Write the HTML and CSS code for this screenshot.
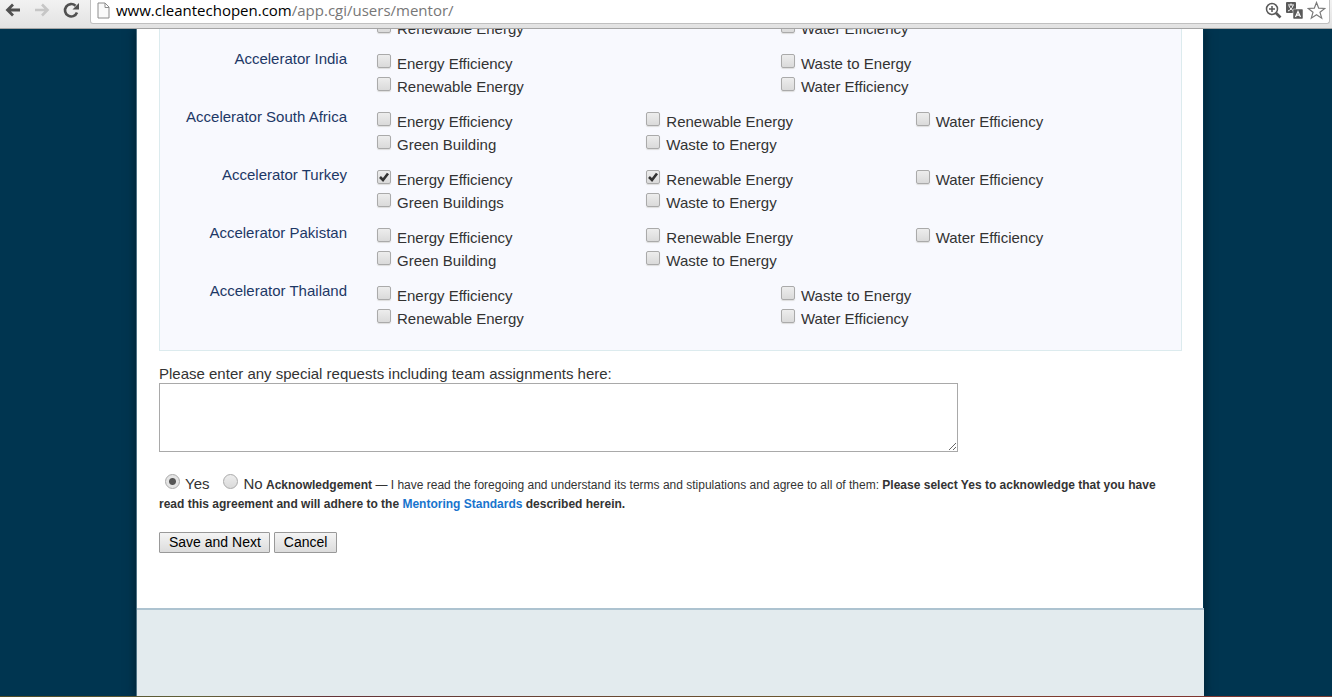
FILE: index.html
```
<!DOCTYPE html>
<html lang="en">
<head>
<meta charset="utf-8">
<title>Mentor application</title>
<link rel="stylesheet" href="styles.css">
</head>
<body>
<header class="toolbar">
  <button class="nav-button" type="button" aria-label="Back"><svg width="18" height="18" viewBox="0 0 18 18"><path d="M16 9H4M9 3.500L3.500 9L9 14.500" fill="none" stroke="#505050" stroke-width="2.800"/></svg></button>
  <button class="nav-button" type="button" aria-label="Forward"><svg width="18" height="18" viewBox="0 0 18 18"><path d="M2 9H14M9 3.500L14.500 9L9 14.500" fill="none" stroke="#c6c6c6" stroke-width="2.600"/></svg></button>
  <button class="nav-button" type="button" aria-label="Reload"><svg width="18" height="18" viewBox="0 0 18 18"><path d="M15 11.500A6.200 6.200 0 1 1 13.500 4.800" fill="none" stroke="#505050" stroke-width="2.600"/><path d="M17 2V8.500H10.500Z" fill="#505050"/></svg></button>
  <div class="address">
    <svg class="page-icon" width="13" height="17" viewBox="0 0 13 17"><path d="M1 1H8L12 5V16H1ZM8 1V5.500H12" fill="#fafafa" stroke="#8c8c8c"/></svg>
    <div class="url" role="textbox" aria-label="Address" tabindex="0">www.cleantechopen.com<span class="url-path">/app.cgi/users/mentor/</span></div>
    <button class="tool-button" type="button" aria-label="Zoom"><svg width="17" height="17" viewBox="0 0 17 17"><circle cx="7" cy="7" r="5.500" fill="none" stroke="#5a5a5a" stroke-width="1.500"/><path d="M4 7H10M7 4V10" stroke="#5a5a5a" stroke-width="1.500"/><path d="M11 11L15.500 15.500" stroke="#5a5a5a" stroke-width="2.600"/></svg></button>
    <button class="tool-button" type="button" aria-label="Translate"><svg width="17" height="17" viewBox="0 0 17 17"><rect x="0" y="0" width="10" height="11" rx="1" fill="#5a5a5a"/><path d="M2 3H8M5 1.500V3M7 3.500C6.500 6 4.500 8 2 9M3 4C4 6.500 6 8 8 9" stroke="#fff" fill="none"/><rect x="7" y="7" width="10" height="10" rx="1" fill="#5a5a5a" stroke="#fff" stroke-width=".5"/><path d="M9.500 15L12 9.500L14.500 15M10.500 13.200H13.500" stroke="#fff" fill="none" stroke-width="1.200"/></svg></button>
    <button class="tool-button" type="button" aria-label="Bookmark"><svg width="19" height="19" viewBox="0 0 19 19"><path d="M9.500 1.500L11.700 7.200L17.800 7.500L13 11.300L14.700 17.200L9.500 13.800L4.300 17.200L6 11.300L1.200 7.500L7.300 7.200Z" fill="#fff" stroke="#7a7a7a" stroke-width="1.200"/></svg></button>
  </div>
</header>
<div class="viewport">
  <div class="shell">
    <main class="content">
      <form>
        <section class="panel">
          <div class="row">
            <span class="row-label"></span>
            <div class="options two">
              <label><input type="checkbox">Energy Efficiency</label><label><input type="checkbox">Waste to Energy</label>
              <label><input type="checkbox">Renewable Energy</label><label><input type="checkbox">Water Efficiency</label>
            </div>
          </div>
          <div class="row" role="group" aria-labelledby="india">
            <span class="row-label" id="india">Accelerator India</span>
            <div class="options two">
              <label><input type="checkbox">Energy Efficiency</label><label><input type="checkbox">Waste to Energy</label>
              <label><input type="checkbox">Renewable Energy</label><label><input type="checkbox">Water Efficiency</label>
            </div>
          </div>
          <div class="row" role="group" aria-labelledby="africa">
            <span class="row-label" id="africa">Accelerator South Africa</span>
            <div class="options three">
              <label><input type="checkbox">Energy Efficiency</label><label><input type="checkbox">Renewable Energy</label><label><input type="checkbox">Water Efficiency</label>
              <label><input type="checkbox">Green Building</label><label><input type="checkbox">Waste to Energy</label>
            </div>
          </div>
          <div class="row" role="group" aria-labelledby="turkey">
            <span class="row-label" id="turkey">Accelerator Turkey</span>
            <div class="options three">
              <label><input type="checkbox" checked>Energy Efficiency</label><label><input type="checkbox" checked>Renewable Energy</label><label><input type="checkbox">Water Efficiency</label>
              <label><input type="checkbox">Green Buildings</label><label><input type="checkbox">Waste to Energy</label>
            </div>
          </div>
          <div class="row" role="group" aria-labelledby="pakistan">
            <span class="row-label" id="pakistan">Accelerator Pakistan</span>
            <div class="options three">
              <label><input type="checkbox">Energy Efficiency</label><label><input type="checkbox">Renewable Energy</label><label><input type="checkbox">Water Efficiency</label>
              <label><input type="checkbox">Green Building</label><label><input type="checkbox">Waste to Energy</label>
            </div>
          </div>
          <div class="row" role="group" aria-labelledby="thailand">
            <span class="row-label" id="thailand">Accelerator Thailand</span>
            <div class="options two">
              <label><input type="checkbox">Energy Efficiency</label><label><input type="checkbox">Waste to Energy</label>
              <label><input type="checkbox">Renewable Energy</label><label><input type="checkbox">Water Efficiency</label>
            </div>
          </div>
        </section>
        <label class="requests-label" for="requests">Please enter any special requests including team assignments here:</label>
        <textarea class="requests" id="requests"></textarea>
        <p class="ack"><label class="choice"><input type="radio" name="ack" checked>Yes</label><label class="choice"><input type="radio" name="ack">No</label> <b>Acknowledgement</b> — I have read the foregoing and understand its terms and stipulations and agree to all of them: <b>Please select Yes to acknowledge that you have read this agreement and will adhere to the <a href="#">Mentoring Standards</a> described herein.</b></p>
        <div class="actions"><button class="push" type="submit">Save and Next</button><button class="push" type="button">Cancel</button></div>
      </form>
    </main>
    <footer class="footer"></footer>
  </div>
</div>
<div class="desktop-edge"></div>
</body>
</html>
```
FILE: styles.css
```
* { box-sizing: border-box; }

body {
  margin: 0;
  height: 100vh;
  display: flex;
  flex-direction: column;
  overflow: hidden;
  font: 15px/23px "Liberation Sans", Arial, sans-serif;
  color: #333;
  background: #003550;
}

.toolbar {
  flex: none;
  display: flex;
  height: 29px;
  padding: 0 2px 4px 4px;
  background: linear-gradient(#f2f2f2, #e2e2e2);
  border-bottom: 1px solid #a5a5a5;
}

.nav-button,
.tool-button {
  display: flex;
  padding: 0;
  border: 0;
  background: none;
}

.nav-button {
  width: 29px;
  padding-top: 1px;
}

.address {
  flex: 1;
  display: flex;
  align-items: center;
  margin-left: -1px;
  padding: 0 3px 3px 6px;
  background: #fff;
  border: 1px solid #c0c0c0;
  border-top: 0;
  border-radius: 0 0 3px 3px;
}

.url {
  flex: 1;
  margin-left: 6px;
  font: 15px/20px "Open Sans", "Noto Sans", sans-serif;
  color: #000;
  white-space: nowrap;
}

.url-path { color: #777; }

.tool-button { margin-left: 4px; }

.viewport {
  flex: 1;
  min-height: 0;
  overflow: hidden;
  padding: 0 128px 0 136px;
}

.shell {
  display: flex;
  flex-direction: column;
  height: 100%;
  border-left: 1px solid #4f7284;
  box-shadow: 0 0 10px #001c2c;
}

.content {
  flex: none;
  margin-right: 1px;
  padding: 0 21px 55px 22px;
  background: #fff;
}

.panel {
  margin-top: -35px;
  padding-bottom: 8px;
  background: #f8f9fe;
  border: 1px solid #dcebee;
  border-top: 0;
}

.row {
  display: flex;
  gap: 30px;
  padding-bottom: 12px;
}

.row-label {
  width: 187px;
  line-height: 14px;
  text-align: right;
  color: #1d3866;
}

.options {
  flex: 1;
  display: grid;
  margin-right: -4px;
}

.two { grid-template-columns: repeat(2, 1fr); }
.three { grid-template-columns: repeat(3, 1fr); }

.options label {
  display: flex;
  gap: 6px;
  align-items: flex-start;
}

input {
  appearance: none;
  flex: none;
  margin: 0;
  border: 1px solid #aaa;
  background: linear-gradient(#ededed, #dadada);
}

input[type="checkbox"] {
  width: 14px;
  height: 14px;
  margin-top: 2px;
  border-radius: 2px;
  box-shadow: 0 1px 1px #ddd;
}

input[type="checkbox"]:checked {
  background: url('data:image/svg+xml,<svg xmlns="http://www.w3.org/2000/svg" viewBox="0 0 12 12"><path d="M2 6L5 9L10 2.500" fill="none" stroke="%23333" stroke-width="2.600"/></svg>') center / 12px 12px, linear-gradient(#ededed, #dadada);
}

.requests-label {
  display: block;
  margin-top: 14px;
  line-height: 18px;
}

.requests {
  display: block;
  width: 78.1%;
  height: 69px;
  border: 1px solid #a9a9a9;
  background: #fff;
}

.ack {
  margin: 22px 0 18px;
  font-size: 12px;
  line-height: 19px;
}

.choice {
  margin-right: 8px;
  font-size: 15px;
}

.choice + .choice { margin-right: 0; }

input[type="radio"] {
  width: 15px;
  height: 15px;
  margin: 0 5px 0 6px;
  border-radius: 50%;
}

input[type="radio"]:checked {
  background: radial-gradient(circle, #555 0 3px, #e4e4e4 4px);
}

a {
  color: #1874cd;
  text-decoration: none;
}

.actions {
  display: flex;
  gap: 4px;
}

.push {
  height: 21px;
  padding: 0 9px;
  font: 14px/19px "Liberation Sans", Arial, sans-serif;
  color: #000;
  border: 1px solid #999;
  border-radius: 1px;
  background: linear-gradient(#f4f4f4, #dcdcdc);
}

.push:first-child { padding: 0 8px 0 9px; }

.footer {
  flex: 1;
  background: #e3ebee;
  border-top: 2px solid #adc3d0;
}

.desktop-edge {
  flex: none;
  height: 1px;
  background: linear-gradient(90deg, #4d4b26, #62603a 15%, #643338 25%, #6b562f 60%, #82342f 85%, #753d31);
}
```
